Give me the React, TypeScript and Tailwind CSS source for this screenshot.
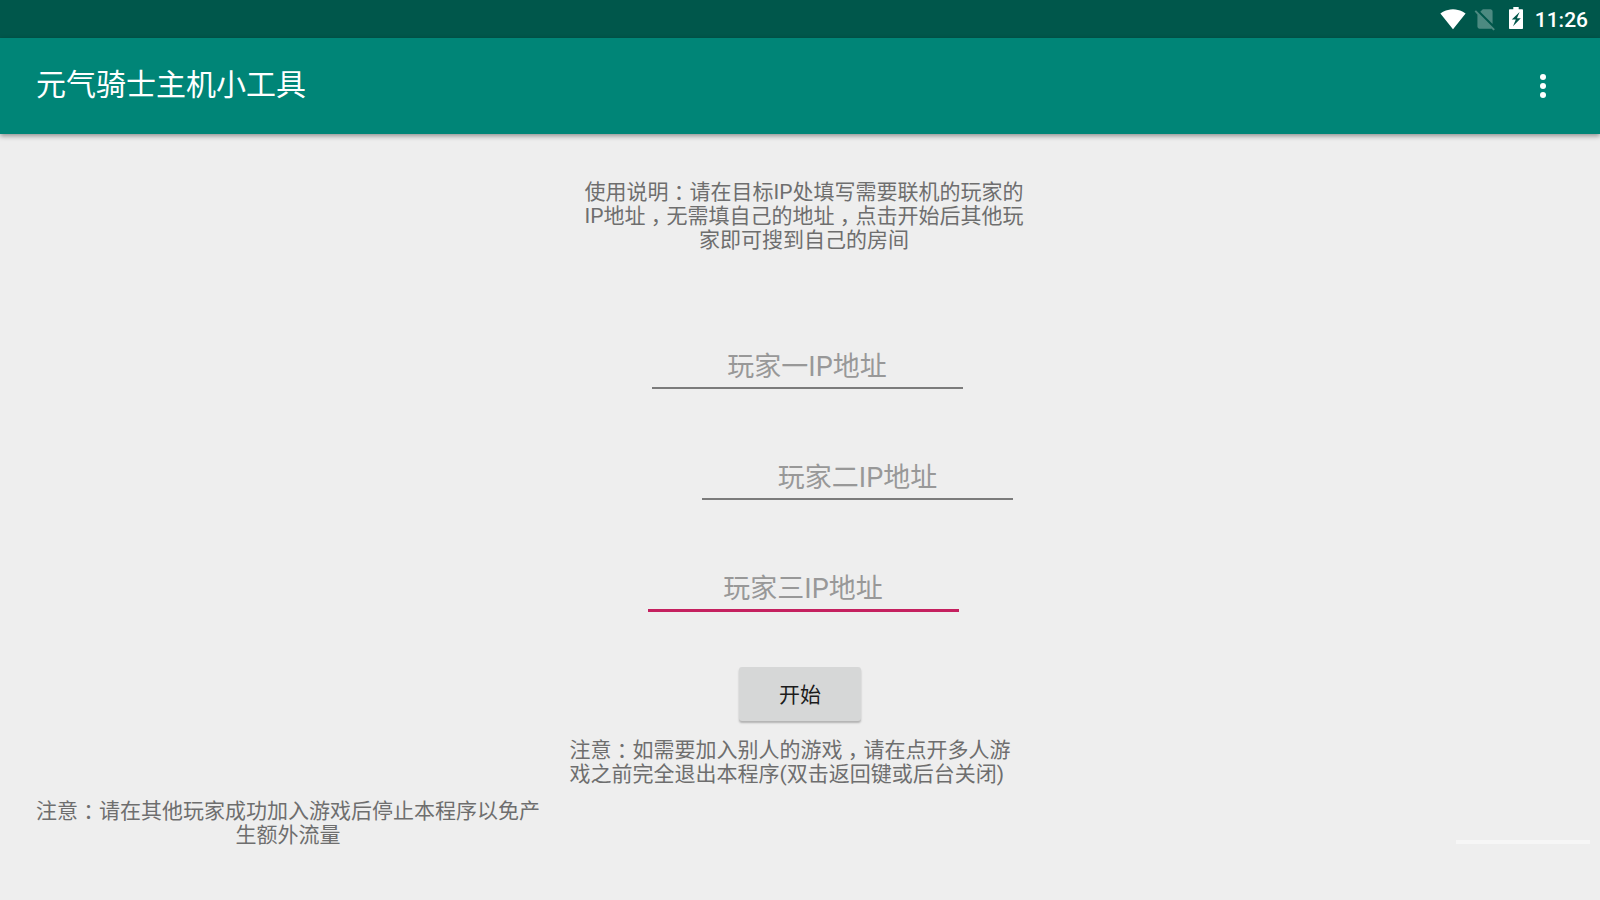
import type { ReactNode } from 'react';

const WifiIcon = () => (
  <svg viewBox="0 0 24 24" className="h-[26px] w-[26px] fill-current" aria-hidden="true">
    <path d="M12.01 21.49L23.64 7c-.45-.34-4.93-4-11.64-4C5.28 3 .81 6.66.36 7l11.63 14.49.01.01.01-.01z" />
  </svg>
);

const NoSimIcon = () => (
  <svg viewBox="0 0 24 24" className="h-[26px] w-[26px] fill-current opacity-30" aria-hidden="true">
    <path d="M18.99 5c0-1.1-.89-2-1.99-2h-7L7.66 5.34 19 16.68 18.99 5zM3.65 3.88L2.38 5.15 5 7.77V19c0 1.1.9 2 2 2h10.01c.35 0 .67-.1.96-.26l1.88 1.88 1.27-1.27L3.65 3.88z" />
  </svg>
);

const BatteryIcon = () => (
  <svg viewBox="0 0 14 22" className="h-[22px] w-[14px] fill-current" aria-hidden="true">
    <path fillRule="evenodd" d="M4.3 0h5.4v2.2h3.3c.6 0 1 .4 1 1V21c0 .6-.4 1-1 1H1c-.6 0-1-.4-1-1V3.2c0-.6.4-1 1-1h3.300zM10.600 5L2.800 12.600h4L4 19.300l7.800-8H7.900z" />
  </svg>
);

const MoreIcon = () => (
  <svg viewBox="0 0 6 24" className="h-6 w-[6px] fill-current" aria-hidden="true">
    <circle cx="3" cy="3" r="3" />
    <circle cx="3" cy="12" r="3" />
    <circle cx="3" cy="21" r="3" />
  </svg>
);

// full-width punctuation, centred in its cell
const Mark = ({ children }: { children: ReactNode }) => (
  <span className="inline-block w-[21px] text-center [font-feature-settings:'halt']">{children}</span>
);

type IpFieldProps = {
  label: string;
  active?: boolean;
};

const IpField = ({ label, active = false }: IpFieldProps) => (
  <input
    type="text"
    aria-label={label}
    placeholder={label}
    className={`block w-[311px] bg-transparent pt-1.5 text-center text-[27px] leading-10 outline-none placeholder:text-[#989898] ${
      active ? 'border-b-3 border-[#c5205f]' : 'border-b-2 border-[#7b7b7b]'
    }`}
  />
);

const App = () => {
  return (
    <div
      lang="zh-CN"
      className="flex min-h-screen flex-col bg-[#eeeeee] font-[Roboto,'Noto_Sans_CJK_SC',sans-serif] text-[21px] leading-6 text-[#6e6e6e]"
    >
      <div className="flex h-[38px] items-center justify-end bg-[#00574b] pr-3 text-white">
        <WifiIcon />
        <span className="ml-1.5"><NoSimIcon /></span>
        <span className="ml-[11px] pb-0.5"><BatteryIcon /></span>
        <span className="ml-3 pt-0.5 font-medium">11:26</span>
      </div>

      <header className="flex h-24 items-center justify-between bg-[#008577] pr-[33px] pl-9 text-white shadow-[0_2px_5px_rgba(0,0,0,0.4)]">
        <h1 className="pb-0.5 text-[30px] leading-9">元气骑士主机小工具</h1>
        <button type="button" aria-label="更多选项" className="flex h-12 w-12 items-center justify-center">
          <MoreIcon />
        </button>
      </header>

      <main className="flex flex-col items-center pt-[46px]">
        <p className="pl-2 text-center">
          使用说明<Mark>：</Mark>请在目标IP处填写需要联机的玩家的<br />
          IP地址<Mark>，</Mark>无需填自己的地址<Mark>，</Mark>点击开始后其他玩<br />
          家即可搜到自己的房间
        </p>

        <form className="mt-[89px] flex flex-col items-center" onSubmit={(e) => e.preventDefault()}>
          <div className="flex flex-col items-center gap-[63px]">
            <div className="pl-[14px]"><IpField label="玩家一IP地址" /></div>
            <div className="pl-[115px]"><IpField label="玩家二IP地址" /></div>
            <div className="pl-1.5"><IpField label="玩家三IP地址" active /></div>
          </div>
          <button
            type="submit"
            className="mt-[55px] h-[54px] w-[122px] rounded-[3px] bg-[#d6d7d7] pt-0.5 text-[#1c1c1c] shadow-[0_2px_2px_rgba(0,0,0,0.25)]"
          >
            开始
          </button>
        </form>

        <p className="mt-[17px] pr-5">
          注意<Mark>：</Mark>如需要加入别人的游戏<Mark>，</Mark>请在点开多人游<br />
          戏之前完全退出本程序(双击返回键或后台关闭)
        </p>

        <div className="mt-[13px] flex w-full items-end justify-between pl-9 pr-[10px]">
          <p className="text-center">
            注意<Mark>：</Mark>请在其他玩家成功加入游戏后停止本程序以免产<br />
            生额外流量
          </p>
          <div className="mb-[3px] h-1 w-[134px] bg-[#f6f6f6]" />
        </div>
      </main>
    </div>
  );
};

export default App;
